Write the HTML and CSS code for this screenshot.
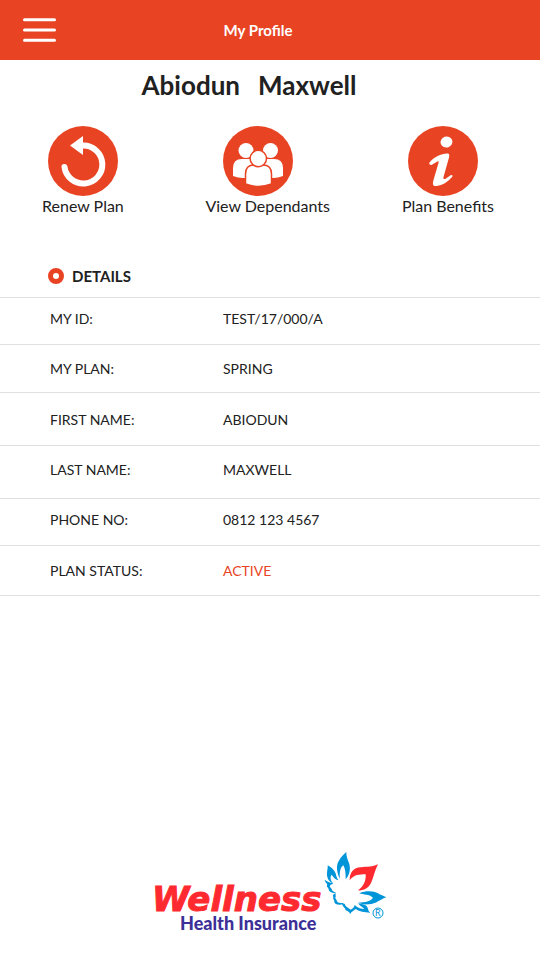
FILE: index.html
```html
<!DOCTYPE html>
<html lang="en">
<head>
<meta charset="utf-8">
<meta name="viewport" content="width=device-width, initial-scale=1">
<title>My Profile</title>
<link rel="stylesheet" href="styles.css">
</head>
<body>
<header class="topbar">
  <button class="menu" type="button" aria-label="Menu">
    <svg width="34" height="26" viewBox="0 0 34 26" stroke="#fff" stroke-width="3" stroke-linecap="round"><path d="M2.500 2.700H32.500M2.500 13H32.500M2.500 23.300H32.500"/></svg>
  </button>
  <h1 class="title">My Profile</h1>
</header>
<main class="content">
  <h2 class="name"><span>Abiodun</span><span>Maxwell</span></h2>
  <nav class="actions">
    <a class="action" href="#renew">
      <svg width="70" height="70" viewBox="0 0 70 70"><circle cx="35" cy="35" r="35" fill="#e84424"/><path d="M16.500 41A19 19 0 1 0 35 19.500" fill="none" stroke="#fff" stroke-width="6" stroke-linecap="round"/><path d="M22 19.500L35 10V29Z" fill="#fff"/></svg>
      <span>Renew Plan</span>
    </a>
    <a class="action action-wide" href="#dependants">
      <svg width="70" height="70" viewBox="0 0 70 70"><circle cx="35" cy="35" r="35" fill="#e84424"/><g fill="#fff"><circle cx="23" cy="24.500" r="7.500"/><circle cx="47.500" cy="24.500" r="7.500"/><path d="M10 50V42Q10 33 19 33H51Q60 33 60 42V50Q55 52 50 52H20Q15 52 10 50Z"/></g><g fill="#fff" stroke="#e84424" stroke-width="1.500"><path d="M22.500 58V48Q22.500 39 31 39H40Q48.500 39 48.500 48V58Q35.500 63 22.500 58Z"/><circle cx="35.300" cy="32.500" r="8.200"/></g></svg>
      <span>View Dependants</span>
    </a>
    <a class="action" href="#benefits">
      <svg width="70" height="70" viewBox="0 0 70 70"><circle cx="35" cy="35" r="35" fill="#e84424"/><g fill="#fff"><ellipse cx="38.500" cy="16" rx="6" ry="5.500" transform="rotate(-20 38.500 16)"/><path d="M21.500 36.500C26 31 33 27.500 39 27.500C41.500 27.500 41.500 29 41 31.500L35.500 51C35 53.500 36.500 53.500 38 52.500L43 49Q45.500 49 44 51C40 56 33 60 28 60C24.500 60 24.500 58 25.500 54L30.500 37C31 34.500 30 35 28.500 36L23.500 39Q20.500 38.500 21.500 36.500Z"/></g></svg>
      <span>Plan Benefits</span>
    </a>
  </nav>
  <section>
    <h3 class="details-title"><span class="ring"></span>DETAILS</h3>
    <table class="details">
      <tbody>
        <tr class="short raised"><th scope="row">MY ID:</th><td>TEST/17/000/A</td></tr>
        <tr class="medium"><th scope="row">MY PLAN:</th><td>SPRING</td></tr>
        <tr class="tall"><th scope="row">FIRST NAME:</th><td>ABIODUN</td></tr>
        <tr class="tall raised"><th scope="row">LAST NAME:</th><td>MAXWELL</td></tr>
        <tr class="short raised"><th scope="row">PHONE NO:</th><td>0812 123 4567</td></tr>
        <tr><th scope="row">PLAN STATUS:</th><td class="active">ACTIVE</td></tr>
      </tbody>
    </table>
  </section>
</main>
<footer class="footer">
  <svg class="logo" width="240" height="85" viewBox="0 0 240 85" role="img" aria-label="Wellness Health Insurance">
    <text class="logo-main" x="2" y="61">Wellness</text>
    <text class="logo-sub" x="30" y="80">Health Insurance</text>
    <g transform="translate(172 0) scale(.333333)">
      <g fill="#0094d9">
        <path d="M73 6C55 22 43 38 45 58C46 70 50 80 54 87C52 68 54 54 64 46C70 56 71 70 71 88C80 78 87 62 82 42C78 30 73 22 73 6Z"/>
        <path d="M17 46C30 53 40 64 42 74C44 82 46 86 50 91C42 90 36 84 29 74C23 82 26 92 34 101C22 96 15 86 15 72C15 60 18 56 17 46Z"/>
        <path d="M34 100C28 98 20 98 8 89C9 98 18 101 15 106C13 112 20 113 20 118C20 125 30 130 42 129C36 125 29 123 29 117C28 113 22 112 24 107C26 103 30 104 34 100Z"/>
        <path d="M42 129C34 132 30 137 35 142C30 146 38 149 37 155C37 162 48 166 62 163C68 161 64 158 59 159C50 160 44 156 44 151C43 146 38 146 41 140C42 136 39 134 42 129Z"/>
        <path d="M60 162C62 170 70 173 71 181C76 182 82 186 85 192C88 184 96 182 101 177C114 186 126 185 145 189C136 182 140 168 128 164C121 162 114 163 109 159C111 168 122 169 127 178C118 176 108 175 98 165C96 174 90 177 86 179C80 173 70 170 68 161Z"/>
        <path d="M112 130C132 121 156 123 168 130C176 135 184 138 193 142C174 148 164 162 140 163C128 164 118 161 108 158C130 157 146 154 153 143C140 132 126 135 112 130Z"/>
      </g>
      <path fill="#ff2a2f" d="M83 91C83 68 94 53 116 52C136 50 152 51 168 43C158 62 155 82 147 99C140 113 126 123 108 121C122 113 133 94 131 73C112 73 96 74 83 91Z"/>
    </g>
    <circle cx="228" cy="63" r="5" fill="none" stroke="#0094d9"/>
    <text class="logo-mark" x="225" y="66">R</text>
  </svg>
</footer>
</body>
</html>
```
FILE: styles.css
```css
* { box-sizing: border-box; }
body {
  margin: 0;
  min-height: 100vh;
  display: flex;
  flex-direction: column;
  background: #fff;
  color: #212121;
  font-family: Lato, "Liberation Sans", sans-serif;
  font-size: 14px;
  line-height: 20px;
}
h1, h2, h3 { margin: 0; }
svg { display: block; }
.topbar {
  display: grid;
  grid-template-columns: 56px 1fr 80px;
  align-items: center;
  height: 60px;
  background: #e84424;
  color: #fff;
}
.menu {
  margin: 0 0 0 22px;
  padding: 0;
  border: 0;
  background: none;
  cursor: pointer;
}
.title {
  font-size: 15px;
  font-weight: 700;
  text-align: center;
}
.content { flex: 1; }
.name {
  display: flex;
  justify-content: center;
  gap: 18px;
  padding: 9px 42px 0 0;
  font-size: 26px;
  font-weight: 700;
  line-height: 32px;
}
.actions {
  display: grid;
  grid-template-columns: 163fr 196fr auto;
  padding: 25px 46px 0 42px;
}
.action {
  color: inherit;
  font-size: 16px;
  text-decoration: none;
}
.action svg { margin-left: 6px; }
.action-wide svg { margin-left: 18px; }
.details-title {
  display: flex;
  align-items: center;
  gap: 8px;
  padding: 50px 48px 11px;
  font-size: 15px;
  font-weight: 700;
}
.ring {
  width: 16px;
  height: 16px;
  border: 5px solid #e84424;
  border-radius: 50%;
}
.details {
  width: 100%;
  border-collapse: separate;
  border-spacing: 0;
  border-top: 1px solid #e0e0e0;
}
.details th, .details td {
  height: 50px;
  padding: 1px 0 0;
  border-bottom: 1px solid #e0e0e0;
  font-weight: 400;
  text-align: left;
}
.details th {
  width: 223px;
  padding-left: 50px;
}
.details .short > * { height: 47px; }
.details .medium > * { height: 48px; }
.details .tall > * { height: 53px; }
.details .raised > * {
  padding-top: 0;
  padding-bottom: 4px;
}
.details .active { color: #e84424; }
.footer {
  display: flex;
  justify-content: center;
  padding-bottom: 25px;
}
.logo-main {
  fill: #ff2a2f;
  stroke: #ff2a2f;
  stroke-width: 1px;
  font-family: "DejaVu Sans", sans-serif;
  font-size: 34px;
  font-style: italic;
  font-weight: 700;
}
.logo-sub {
  fill: #3c3098;
  font-size: 18px;
  font-weight: 900;
}
.logo-mark {
  fill: #0094d9;
  font-size: 9px;
}
```
